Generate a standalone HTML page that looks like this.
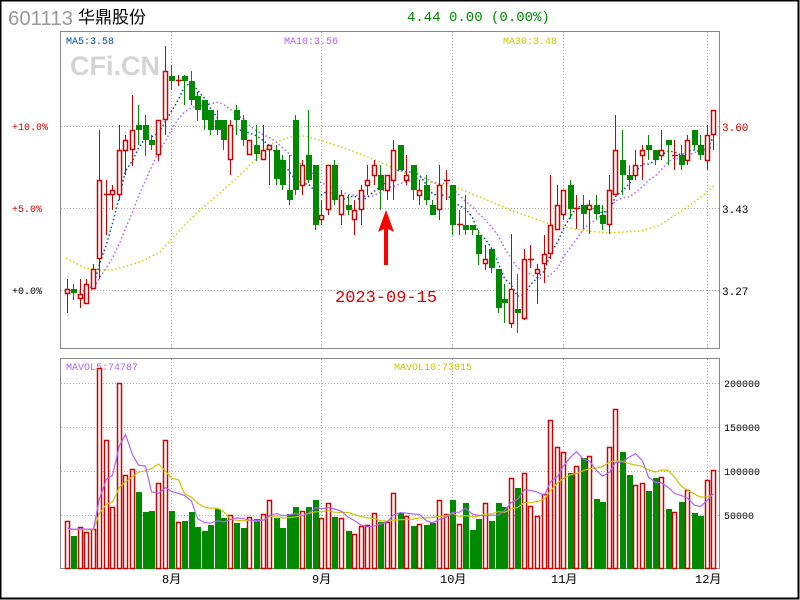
<!DOCTYPE html>
<html><head><meta charset="utf-8">
<style>
html,body{margin:0;padding:0;background:#fff;}
body{width:800px;height:600px;overflow:hidden;position:relative;}
svg{position:absolute;left:0;top:0;}
text{font-family:"Liberation Mono",monospace;}
</style></head>
<body>
<svg id="s" width="800" height="600" xmlns="http://www.w3.org/2000/svg">
<rect x="0.5" y="0.5" width="798" height="598" fill="#fff" stroke="#000" stroke-width="2"/>
<text x="8" y="25" style="font-family:'Liberation Sans',sans-serif" font-size="20" fill="#999" textLength="65" lengthAdjust="spacingAndGlyphs">601113</text>
<text x="78" y="23" style="font-family:'Liberation Sans','Noto Sans CJK SC',sans-serif" font-size="17" fill="#000">华鼎股份</text>
<text x="407" y="21" font-size="14" fill="#008800">4.44 0.00 (0.00%)</text>
<rect x="60.5" y="31.5" width="659" height="317" fill="none" stroke="#888"/>
<rect x="60.5" y="358.5" width="659" height="210" fill="none" stroke="#888"/>
<g stroke="#aaa" stroke-dasharray="1 2" fill="none">
<line x1="61" y1="126.5" x2="719" y2="126.5"/>
<line x1="61" y1="208.5" x2="719" y2="208.5"/>
<line x1="61" y1="290.5" x2="719" y2="290.5"/>
<line x1="171.5" y1="32" x2="171.5" y2="348"/>
<line x1="321.5" y1="32" x2="321.5" y2="348"/>
<line x1="452.5" y1="32" x2="452.5" y2="348"/>
<line x1="563.5" y1="32" x2="563.5" y2="348"/>
<line x1="707.5" y1="32" x2="707.5" y2="348"/>
<line x1="61" y1="383.5" x2="719" y2="383.5"/>
<line x1="61" y1="427.5" x2="719" y2="427.5"/>
<line x1="61" y1="471.5" x2="719" y2="471.5"/>
<line x1="61" y1="515.5" x2="719" y2="515.5"/>
<line x1="171.5" y1="359" x2="171.5" y2="568"/>
<line x1="321.5" y1="359" x2="321.5" y2="568"/>
<line x1="452.5" y1="359" x2="452.5" y2="568"/>
<line x1="563.5" y1="359" x2="563.5" y2="568"/>
<line x1="707.5" y1="359" x2="707.5" y2="568"/>
</g>
<text x="70" y="75" style="font-family:'Liberation Sans',sans-serif" font-weight="bold" font-size="27" fill="#d4d4d4">CFi.CN</text>
<text x="66" y="44" font-size="10" fill="#0050a0">MA5:3.58</text>
<text x="284" y="44" font-size="10" fill="#b060ff">MA10:3.56</text>
<text x="503" y="44" font-size="10" fill="#c8c800">MA30:3.48</text>
<text x="12" y="130" font-size="10" fill="#d00000">+10.0%</text>
<text x="12" y="212" font-size="10" fill="#d00000">+5.0%</text>
<text x="12" y="294" font-size="10" fill="#000">+0.0%</text>
<text x="722" y="131" font-size="11" fill="#d00000">3.60</text>
<text x="722" y="213" font-size="11" fill="#000">3.43</text>
<text x="722" y="295" font-size="11" fill="#000">3.27</text>
<text x="66" y="370" font-size="10" fill="#b060ff">MAVOL5:74787</text>
<text x="394" y="370" font-size="10" fill="#c8c800">MAVOL10:73815</text>
<text x="724" y="387" font-size="10" fill="#000">200000</text>
<text x="724" y="431" font-size="10" fill="#000">150000</text>
<text x="724" y="475" font-size="10" fill="#000">100000</text>
<text x="724" y="519" font-size="10" fill="#000">50000</text>
<g style="font-family:'Liberation Sans','Noto Sans CJK SC',sans-serif" font-size="12" fill="#000">
<text x="162" y="583">8月</text><text x="312" y="583">9月</text><text x="440" y="583">10月</text><text x="551" y="583">11月</text><text x="695" y="583">12月</text>
</g>
<g id="c"></g>
<polygon points="386,210 378,232 384,229 384,265 388,265 388,229 394,232" fill="#f00"/>
<text x="335" y="302" font-size="17" fill="#e00000">2023-09-15</text>
</svg>
<script>
var D=[[293,289,279,313],[289,293,284,300],[298,294,279,308],[303,284,279,303],[288,269,264,288],[258,180,130,279],[194,194,180,235],[194,190,185,210],[194,150,125,200],[150,140,135,175],[149,130,95,166],[125,130,105,145],[125,140,115,156],[140,145,135,150],[154,120,120,161],[119,71,46,135],[76,81,65,90],[80,80,75,86],[76,81,75,105],[81,100,71,105],[96,110,92,121],[100,120,100,130],[110,130,110,135],[120,130,110,135],[120,140,120,150],[159,125,120,175],[110,120,105,135],[120,140,115,146],[154,140,140,154],[145,154,125,161],[159,150,125,160],[149,145,145,185],[150,179,145,185],[160,185,155,190],[190,200,155,205],[120,190,115,195],[185,165,160,195],[155,180,110,183],[165,225,165,230],[219,215,200,225],[209,165,165,215],[165,200,160,205],[214,195,190,225],[205,210,195,215],[219,210,200,235],[209,190,185,225],[185,180,165,195],[175,165,160,185],[175,190,165,210],[190,175,175,200],[180,150,140,200],[145,170,145,170],[180,175,155,185],[165,190,165,200],[195,190,180,205],[185,200,175,205],[205,215,200,215],[209,185,165,220],[180,180,170,200],[185,225,185,235],[224,224,210,235],[225,230,195,235],[225,230,225,235],[235,254,230,265],[263,259,245,270],[249,268,249,273],[269,308,269,313],[299,303,284,323],[323,289,234,328],[309,313,274,333],[318,259,249,320],[259,259,245,268],[273,269,264,304],[263,254,235,283],[253,225,175,259],[229,205,185,229],[214,190,190,220],[185,209,180,219],[208,208,195,229],[205,214,195,229],[209,205,200,234],[205,214,195,219],[215,224,205,230],[224,190,175,234],[194,150,115,194],[160,175,130,195],[175,180,165,190],[175,165,150,180],[155,150,145,180],[145,150,135,160],[150,160,150,165],[155,150,130,160],[140,145,140,165],[155,155,140,170],[155,165,145,170],[160,140,135,165],[130,145,130,150],[145,155,135,160],[160,135,125,170],[134,110,110,150]];
var V=[521,536,527,532,529,368,440,507,383,475,469,492,512,511,483,440,511,522,521,512,527,531,525,509,518,515,523,528,517,519,514,500,518,528,514,507,511,507,500,518,503,517,518,531,534,526,525,513,522,522,493,513,516,526,524,525,523,500,514,500,524,503,530,519,503,521,503,507,478,488,473,506,516,494,420,447,452,473,466,458,456,499,502,447,409,452,475,485,483,491,478,477,509,512,502,490,513,516,480,470];
var R="#d00000",G="#008a00",h="";
function X(i){return Math.round(66.5+i*6.535);}
function ma(arr,n,first){var o=[];for(var i=0;i<arr.length;i++){var s=0;for(var k=i-n+1;k<=i;k++){s+=k<0?first:arr[k];}o.push(s/n);}return o;}
var C=D.map(function(d){return d[1]});
function pl(arr,col,dash,w){var p=[];for(var i=0;i<arr.length;i++)p.push((X(i)+0.5)+","+arr[i].toFixed(1));return '<polyline points="'+p.join(" ")+'" fill="none" stroke="'+col+'" stroke-width="'+w+'"'+(dash?' stroke-dasharray="'+dash+'"':'')+'/>';}
var m30=[[66,258],[85,268],[100,270],[113,270],[140,262],[160,252],[180,230],[200,210],[220,193],[240,175],[260,155],[273,143],[290,137],[303,136],[320,140],[350,150],[380,162],[420,180],[457,188],[480,197],[513,211],[547,223],[580,230],[607,233],[640,231],[660,225],[680,212],[700,198],[714,186]];
h+='<polyline points="'+m30.map(function(p){return p.join(",")}).join(" ")+'" fill="none" stroke="#d0d000" stroke-width="1.5" stroke-dasharray="1.5 2.5"/>';
h+=pl(ma(C,10,292),"#b060ff","1.5 2.5",1.5);
h+=pl(ma(C,5,292),"#0050a0","1.5 2.5",1.5);
for(var i=0;i<100;i++){var d=D[i],x=X(i),up=d[0]>d[1]||(d[0]==d[1]&&i!=1);
 var col=up?R:G,t=Math.min(d[0],d[1]),b=Math.max(d[0],d[1]);
 h+='<line x1="'+(x+0.5)+'" y1="'+d[2]+'" x2="'+(x+0.5)+'" y2="'+d[3]+'" stroke="'+col+'"/>';
 if(b-t<1){h+='<line x1="'+(x-2)+'" y1="'+(t+0.5)+'" x2="'+(x+4)+'" y2="'+(t+0.5)+'" stroke="'+col+'" stroke-width="1.5"/>';}
 else if(up){h+='<rect x="'+(x-1.5)+'" y="'+(t+0.5)+'" width="4" height="'+(b-t)+'" fill="#fff" stroke="'+R+'" stroke-width="1.5"/>';}
 else{h+='<rect x="'+(x-2)+'" y="'+t+'" width="6" height="'+(b-t)+'" fill="'+G+'"/>';}
 var v=V[i];
 if(up){h+='<rect x="'+(x-1.5)+'" y="'+(v+0.5)+'" width="4" height="'+(568-v)+'" fill="#fff" stroke="'+R+'" stroke-width="1.5"/>';}
 else{h+='<rect x="'+(x-2)+'" y="'+v+'" width="6" height="'+(569-v)+'" fill="'+G+'"/>';}
}
h+=pl(ma(V,10,530),"#c8c800",null,1.2);
h+=pl(ma(V,5,530),"#b060ff",null,1.2);
document.getElementById("c").innerHTML=h;
</script>
</body></html>
